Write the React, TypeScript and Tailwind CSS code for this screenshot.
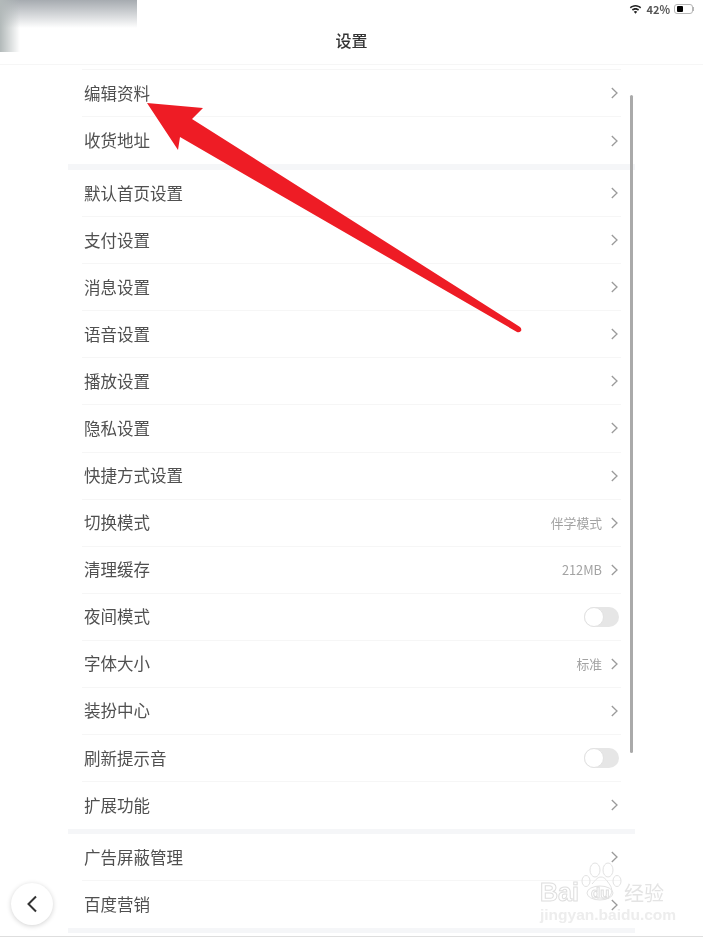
import React from 'react';

type Row = { label: string; value?: string; toggle?: boolean };

const firstGroup: Row[] = [{ label: '编辑资料' }, { label: '收货地址' }];

const secondGroup: Row[] = [
  { label: '默认首页设置' },
  { label: '支付设置' },
  { label: '消息设置' },
  { label: '语音设置' },
  { label: '播放设置' },
  { label: '隐私设置' },
  { label: '快捷方式设置' },
  { label: '切换模式', value: '伴学模式' },
  { label: '清理缓存', value: '212MB' },
  { label: '夜间模式', toggle: true },
  { label: '字体大小', value: '标准' },
  { label: '装扮中心' },
  { label: '刷新提示音', toggle: true },
  { label: '扩展功能' },
];

const thirdGroup: Row[] = [{ label: '广告屏蔽管理' }, { label: '百度营销' }];

const Chevron = () => (
  <svg width="7" height="12" viewBox="0 0 7 12" fill="none" className="text-[#9b9b9b]">
    <path d="M.8 1 6 6 .8 11" stroke="currentColor" strokeWidth="1.3" />
  </svg>
);

const SettingRow = ({ row, last }: { row: Row; last: boolean }) => (
  <div
    className={`flex h-[47.07px] items-center justify-between pl-[2px] ${
      last ? '' : 'border-b border-[#f6f6f6]'
    }`}
  >
    <span className="text-[16.5px] text-[#505050]">{row.label}</span>
    {row.toggle ? (
      <div className="mr-[2px] flex h-[20px] w-[35px] items-center rounded-full bg-[#e6e6e6]">
        <div className="h-[20px] w-[20px] rounded-full border border-[#e2e2e2] bg-white" />
      </div>
    ) : (
      <div className="flex items-center gap-[9px] pr-[3px]">
        {row.value && <span className="text-[12.8px] text-[#a3a3a3]">{row.value}</span>}
        <Chevron />
      </div>
    )}
  </div>
);

const Group = ({ rows }: { rows: Row[] }) => (
  <div className="px-[82px]">
    {rows.map((row, i) => (
      <SettingRow key={row.label} row={row} last={i === rows.length - 1} />
    ))}
  </div>
);

const StatusIcons = () => (
  <div className="flex h-[18px] items-center justify-end gap-[4px] pr-[9px]">
    <svg width="13" height="9" viewBox="0 0 13 10" fill="#222">
      <path d="M6.5 0C4 0 1.8 1 .2 2.6l1.2 1.3C2.7 2.6 4.5 1.8 6.5 1.8s3.8.8 5.1 2.1l1.2-1.3C11.2 1 9 0 6.5 0Z" />
      <path d="M6.5 3.4c-1.6 0-3 .6-4 1.7l1.2 1.3c.7-.7 1.7-1.2 2.8-1.2s2.1.5 2.8 1.2l1.2-1.3c-1-1.1-2.4-1.7-4-1.7Z" />
      <path d="M6.5 6.7c-.8 0-1.4.3-1.9.8l1.9 2.2 1.9-2.2c-.5-.5-1.1-.8-1.9-.8Z" />
    </svg>
    <span className="text-[11px] leading-none font-semibold text-[#555]">42%</span>
    <div className="flex items-center">
      <div className="flex h-[10px] w-[19px] items-center rounded-[3px] border border-[#b5b5b5] px-[2px]">
        <div className="h-[6px] w-[6px] rounded-[1px] bg-black" />
      </div>
      <div className="h-[4px] w-[1px] bg-[#b5b5b5]" />
    </div>
  </div>
);

const outlined = 'text-white [-webkit-text-stroke:1px_#dedede]';

const Watermark = () => (
  <div className="absolute top-[860px] left-[540px] h-[64px] w-[126px] whitespace-nowrap">
    <svg width="42" height="44" viewBox="0 0 42 44" fill="none" stroke="#e2e2e2" className="absolute top-0 left-[40px]">
      <ellipse cx="15" cy="10" rx="5" ry="7" />
      <ellipse cx="28" cy="10" rx="5" ry="7" />
      <ellipse cx="6" cy="21" rx="4" ry="5.5" />
      <ellipse cx="37" cy="21" rx="4" ry="5.5" />
      <path d="M21 17c-4 0-6 4-9 7" />
      <path d="M21 17c4 0 6 4 9 8 2 3 3 8-1 12-3 3-6 1-9 1" />
      <ellipse cx="20" cy="33" rx="13" ry="7" />
    </svg>
    <span className={`absolute top-[18px] left-0 font-['Liberation_Sans'] text-[25px] leading-[28px] font-bold ${outlined}`}>Bai</span>
    <span className={`absolute top-[25px] left-[51px] font-['Liberation_Sans'] text-[15px] leading-[16px] font-bold ${outlined}`}>du</span>
    <span className="absolute top-[21px] left-[84px] text-[20px] leading-[24px] text-[#e4e4e4]">经验</span>
    <span className="absolute top-[46px] left-0 font-['Liberation_Sans'] text-[15.5px] leading-[17px] font-bold text-[#ededed]">jingyan.baidu.com</span>
  </div>
);

const BlurredCorner = () => (
  <div className="absolute top-0 left-0 h-[52px] w-[137px] bg-white">
    <div className="h-[28px] w-full bg-gradient-to-b from-[#a6abb0] to-white" />
    <div className="absolute top-0 left-0 h-full w-[20px] bg-gradient-to-r from-[#b2b9b9] to-transparent" />
  </div>
);

export default function App() {
  return (
    <div className="relative h-[938px] w-[703px] overflow-hidden bg-white font-['Noto_Sans_CJK_SC','Noto_Sans',sans-serif] blur-[0.5px]">
      <header className="h-[65px] border-b border-[#f6f6f6]">
        <StatusIcons />
        <h1 className="mt-[10px] text-center text-[16px] leading-[24px] font-medium text-[#333]">设置</h1>
      </header>
      <div className="mx-[82px] mt-[4px] border-b border-[#f6f6f6]" />
      <Group rows={firstGroup} />
      <div className="mx-[68px] h-[6px] bg-[#f5f6f8]" />
      <Group rows={secondGroup} />
      <div className="mx-[68px] h-[5px] bg-[#f5f6f8]" />
      <Group rows={thirdGroup} />
      <div className="mx-[68px] h-[5px] bg-[#f5f6f8]" />
      <div className="mt-[3px] border-t border-[#dedede]" />

      {/* scrollbar */}
      <div className="absolute top-[95px] left-[630px] h-[658px] w-[3px] rounded-full bg-[#aaaaaa]" />

      <BlurredCorner />
      <Watermark />

      <button className="absolute top-[883px] left-[11px] flex h-[42px] w-[42px] items-center justify-center rounded-full bg-white shadow-[0_1px_5px_rgba(0,0,0,0.18)]">
        <svg width="12" height="18" viewBox="0 0 12 18" fill="none">
          <path d="M10 1.5 2.5 9l7.5 7.5" stroke="#333" strokeWidth="2" />
        </svg>
      </button>

      {/* annotation arrow */}
      <svg width="703" height="938" viewBox="0 0 703 938" className="absolute top-0 left-0">
        <path
          d="M147 103 203 108 192 119 520 327Q522 329 521 331 519 333 517 332L180 137 178 150Z"
          fill="#ee1c25"
        />
      </svg>
    </div>
  );
}
